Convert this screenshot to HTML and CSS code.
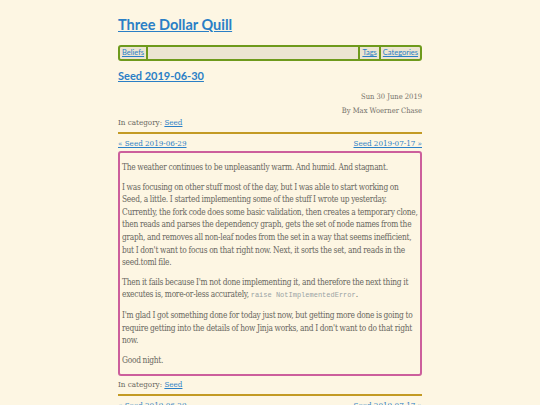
FILE: index.html
```html
<!DOCTYPE html>
<html>
<head>
<meta charset="utf-8">
<link rel="stylesheet" href="styles.css">
</head>
<body>
<div class="page">
  <h1 class="site-title"><a href="#">Three Dollar Quill</a></h1>
  <nav class="menu">
    <a class="menu-item left" href="#">Beliefs</a>
    <span class="menu-spacer"></span>
    <a class="menu-item right" href="#">Tags</a>
    <a class="menu-item right" href="#">Categories</a>
  </nav>
  <h2 class="post-title"><a href="#">Seed 2019-06-30</a></h2>
  <div class="meta">
    <div>Sun 30 June 2019</div>
    <div>By Max Woerner Chase</div>
  </div>
  <div class="category">In category: <a href="#">Seed</a></div>
  <hr class="rule">
  <div class="pager"><a href="#">« Seed 2019-06-29</a><a href="#">Seed 2019-07-17 »</a></div>
  <article class="post">
    <p>The weather continues to be unpleasantly warm. And humid. And stagnant.</p>
    <p>I was focusing on other stuff most of the day, but I was able to start working on<br>
    Seed, a little. I started implementing some of the stuff I wrote up yesterday.<br>
    Currently, the fork code does some basic validation, then creates a temporary clone,<br>
    then reads and parses the dependency graph, gets the set of node names from the<br>
    graph, and removes all non-leaf nodes from the set in a way that seems inefficient,<br>
    but I don't want to focus on that right now. Next, it sorts the set, and reads in the<br>
    seed.toml file.</p>
    <p>Then it fails because I'm not done implementing it, and therefore the next thing it<br>
    executes is, more-or-less accurately, <code>raise NotImplementedError</code>.</p>
    <p>I'm glad I got something done for today just now, but getting more done is going to<br>
    require getting into the details of how Jinja works, and I don't want to do that right<br>
    now.</p>
    <p>Good night.</p>
  </article>
  <div class="category bottom">In category: <a href="#">Seed</a></div>
  <hr class="rule">
  <div class="pager"><a href="#">« Seed 2019-06-29</a><a href="#">Seed 2019-07-17 »</a></div>
</div>
</body>
</html>
```

FILE: styles.css
```css
html, body {
  margin: 0;
  padding: 0;
  background: #fdf6e3;
}
body {
  font-family: "DejaVu Serif", serif;
  font-stretch: condensed;
  font-size: 8px;
  color: #686660;
}
a {
  color: #2a7fc6;
  text-decoration: underline;
}
.page {
  width: 304px;
  margin: 0 auto;
  padding-top: 16px;
}
.site-title {
  font-family: Lato, "Open Sans", sans-serif;
  font-stretch: normal;
  font-weight: 700;
  font-size: 14.5px;
  line-height: 18px;
  margin: 0;
}
.menu {
  margin-top: 11px;
  height: 12px;
  border: 2px solid #6e9a1c;
  border-radius: 3px;
  background: #ece5d2;
  display: flex;
  align-items: stretch;
  font-family: Lato, "Open Sans", sans-serif;
  font-stretch: normal;
  font-size: 7.5px;
  line-height: 12px;
}
.menu-item {
  padding: 0 2px;
}
.menu-item.left {
  border-right: 2px solid #6e9a1c;
  padding-left: 2px;
}
.menu-item.right {
  border-left: 2px solid #6e9a1c;
}
.menu-spacer {
  flex: 1;
}
.post-title {
  font-family: Lato, "Open Sans", sans-serif;
  font-stretch: normal;
  font-weight: 700;
  font-size: 11px;
  line-height: 14px;
  margin: 8px 0 0;
}
.meta {
  text-align: right;
  line-height: 14px;
  font-size: 7.5px;
  margin-top: 7px;
  color: #74716a;
}
.category {
  line-height: 10px;
}
.category.bottom {
  margin-top: 4px;
}
.rule {
  border: 0;
  height: 2px;
  background: #c39a24;
  margin: 4px 0;
}
.pager {
  display: flex;
  justify-content: space-between;
  line-height: 12px;
  margin-bottom: 1px;
}
.post {
  border: 2px solid #cc5f9c;
  border-radius: 3px;
  padding: 1px 0 1px 2px;
}
.post p {
  margin: 7px 0;
  line-height: 12.6px;
  font-size: 8.3px;
  letter-spacing: -0.26px;
  word-spacing: -0.2px;
  white-space: nowrap;
}
code {
  font-family: "Liberation Mono", monospace;
  font-size: 7px;
  letter-spacing: 0;
  word-spacing: 0;
  color: #9aa3a3;
}
```
